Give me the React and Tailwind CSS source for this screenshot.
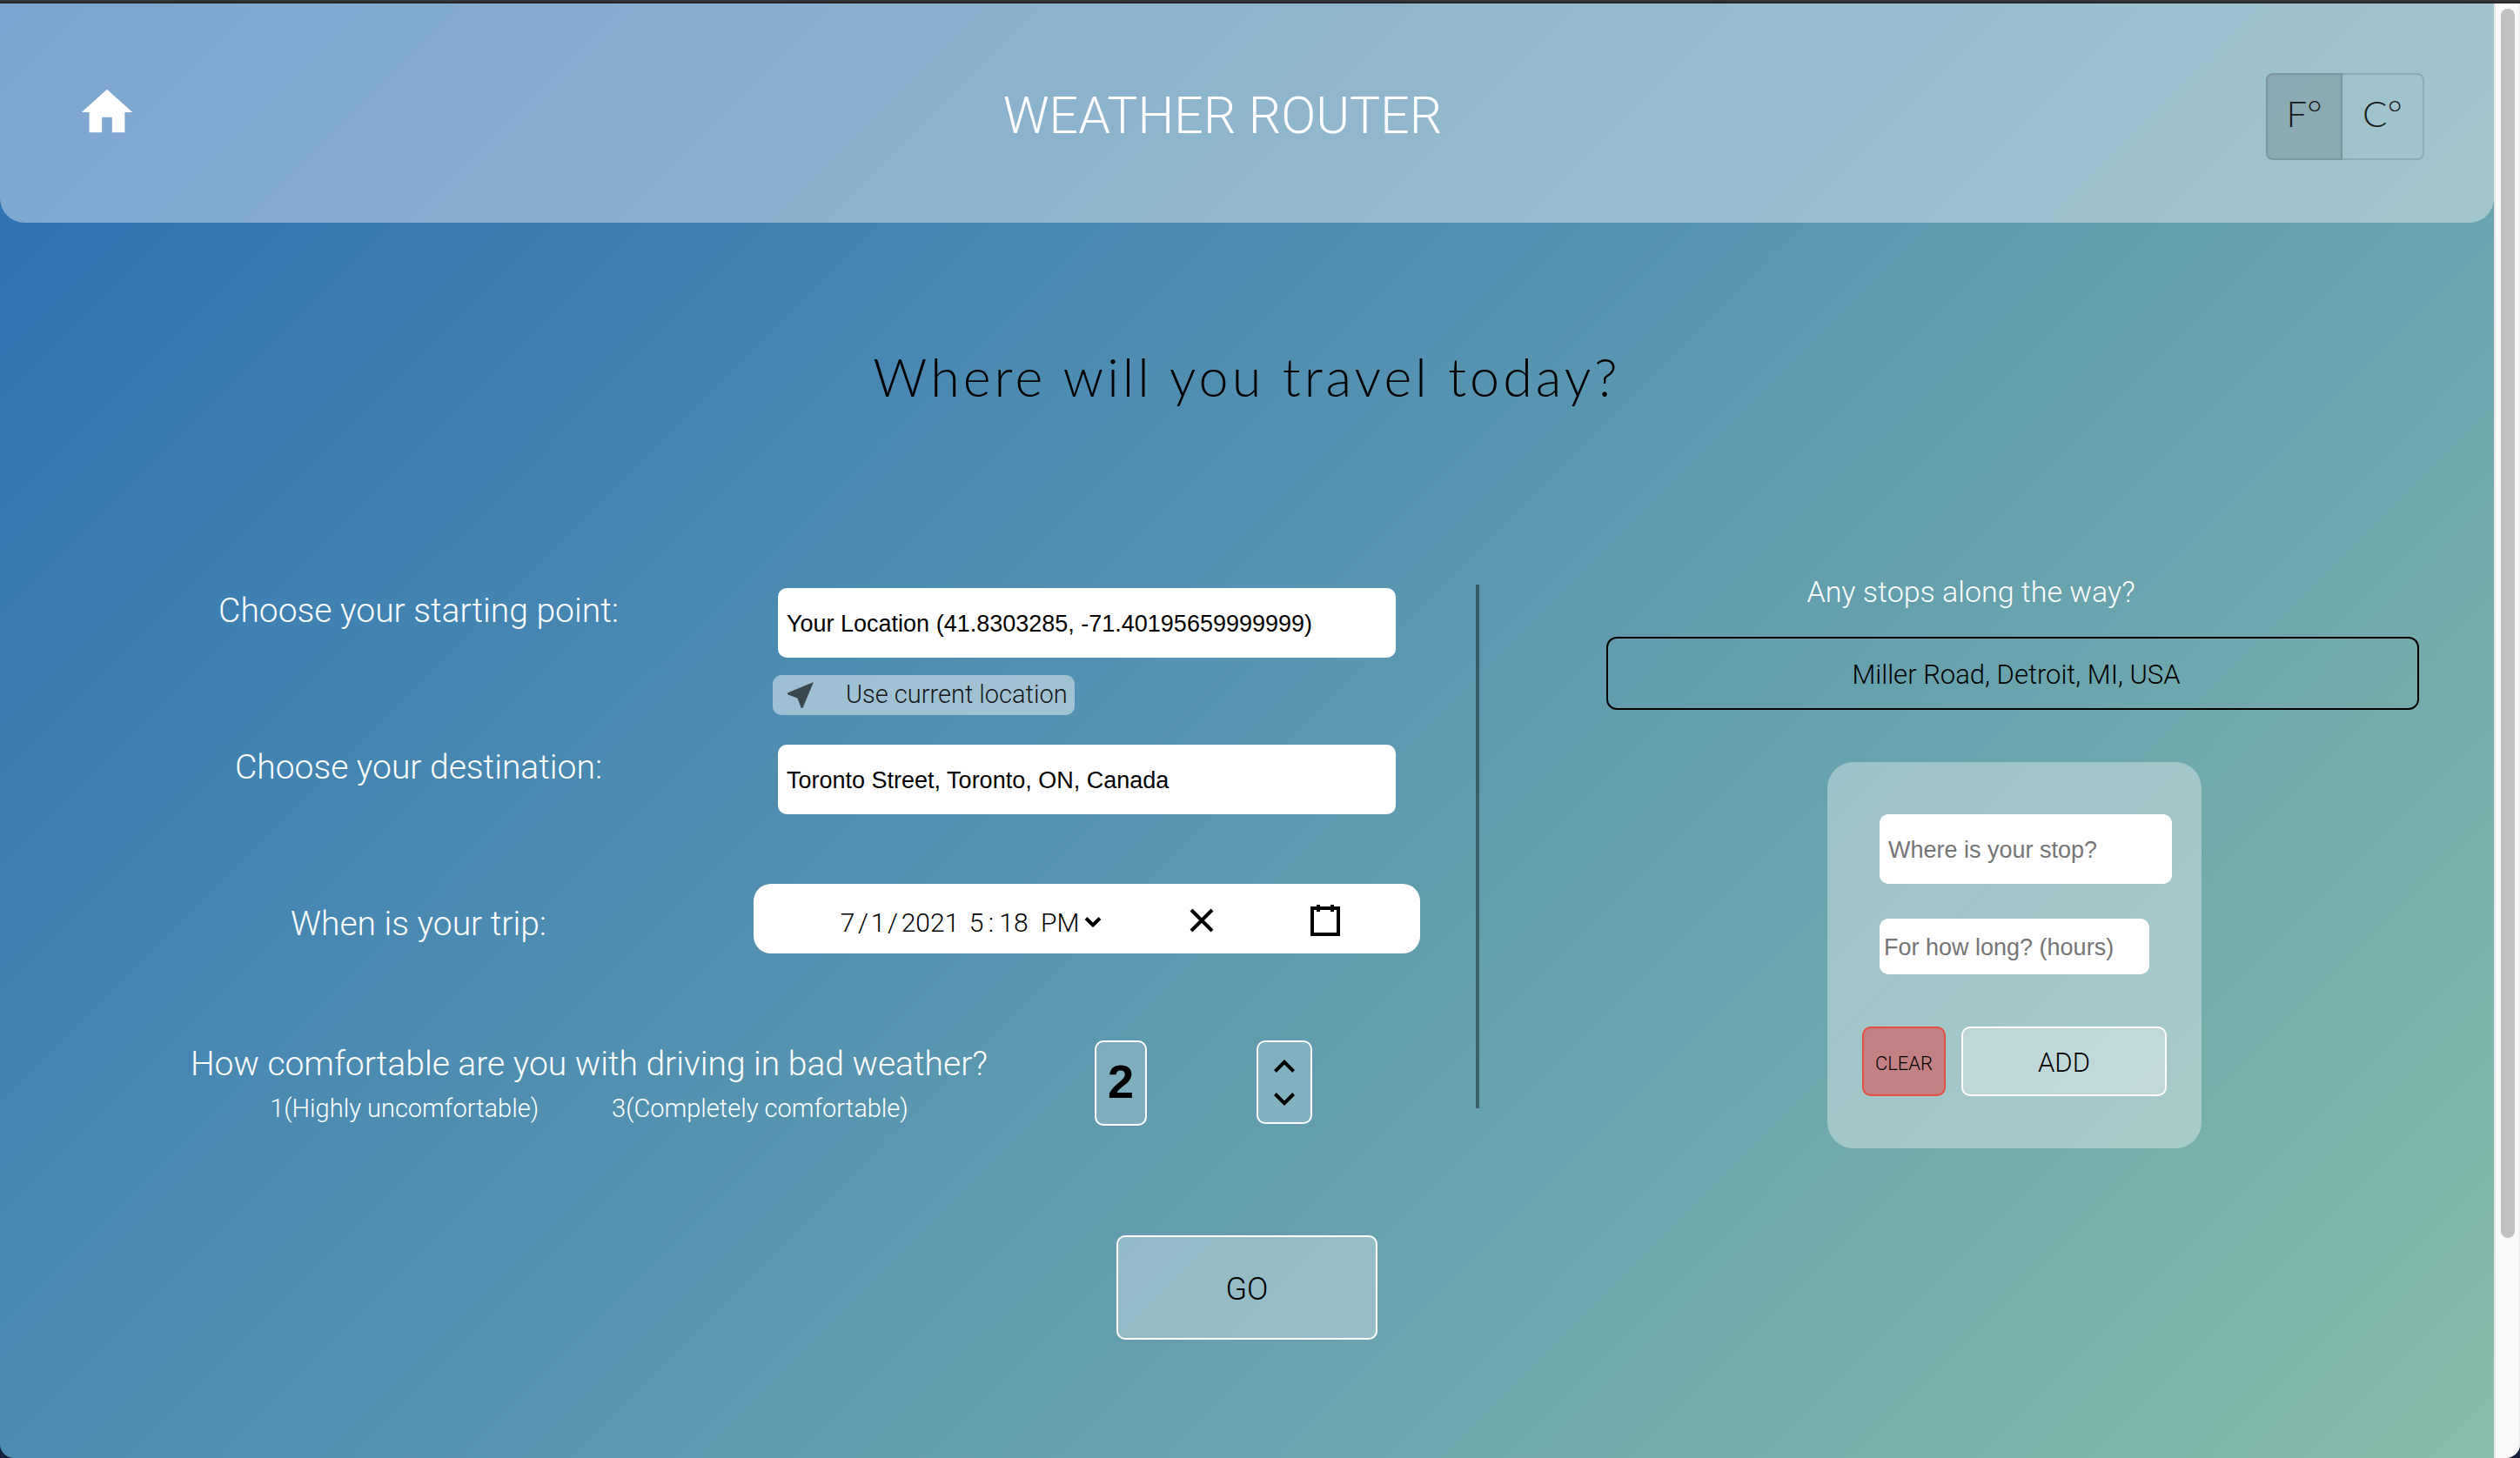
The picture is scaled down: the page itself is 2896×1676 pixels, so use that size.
import React, { useState } from "react";

function FieldLabel({ htmlFor, children }) {
  return (
    <label htmlFor={htmlFor} className="pt-[2px] text-center text-[39px] leading-12 text-white">
      {children}
    </label>
  );
}

function Header({ unit, onUnit }) {
  return (
    <header className="flex h-[252px] items-start justify-between rounded-b-[28px] bg-white/38 pr-20 pl-[88px]">
      <a href="#home" aria-label="Home" className="mt-[90px] pr-12 text-white">
        <svg viewBox="0 0 24 24" className="size-[70px]" fill="currentColor" aria-hidden="true">
          <path d="M10 20v-6h4v6h5v-8h3L12 3 2 12h3v8z" />
        </svg>
      </a>
      <h1 className="mt-[93px] text-[59px] leading-[72px] font-light text-white">WEATHER ROUTER</h1>
      <div
        role="group"
        aria-label="Temperature unit"
        className="mt-20 flex h-[100px] text-[42px] font-light text-black/87 font-['Lato',sans-serif]"
      >
        <button
          type="button"
          aria-pressed={unit === "F"}
          onClick={() => onUnit("F")}
          className="w-[88px] rounded-l-lg border-2 border-black/12 bg-black/12 pb-2"
        >
          F°
        </button>
        <button
          type="button"
          aria-pressed={unit === "C"}
          onClick={() => onUnit("C")}
          className="w-[94px] rounded-r-lg border-2 border-l-0 border-black/12 pb-2"
        >
          C°
        </button>
      </div>
    </header>
  );
}

const PART = "bg-transparent p-0 text-center outline-none";

function DateTimeField() {
  return (
    <div
      role="group"
      aria-labelledby="trip-label"
      className="flex h-20 w-full items-center rounded-[20px] bg-white pt-1 pr-[90px] pl-[98px] text-[30px] text-black"
    >
      <div className="flex items-center pt-1">
        <input id="trip-month" aria-label="Month" defaultValue="7" className={`${PART} w-[20px]`} />
        <span className="w-[16px] text-center">/</span>
        <input aria-label="Day" defaultValue="1" className={`${PART} w-[18px]`} />
        <span className="w-[16px] text-center">/</span>
        <input aria-label="Year" defaultValue="2021" className={`${PART} w-[70px]`} />
        <input aria-label="Hour" defaultValue="5" className={`${PART} ml-2 w-[20px]`} />
        <span className="w-[14px] text-center">:</span>
        <input aria-label="Minute" defaultValue="18" className={`${PART} w-[38px]`} />
        <div className="relative ml-3">
          <select
            aria-label="AM or PM"
            defaultValue="PM"
            className="w-[70px] appearance-none bg-transparent p-0 outline-none"
          >
            <option>AM</option>
            <option>PM</option>
          </select>
          <svg
            viewBox="0 0 20 14"
            className="pointer-events-none absolute top-1/2 right-0 h-[14px] w-5 -translate-y-1/2"
            fill="none"
            stroke="black"
            strokeWidth="4"
            aria-hidden="true"
          >
            <path d="M2 2.5l8 8 8-8" />
          </svg>
        </div>
      </div>
      <button type="button" aria-label="Clear date" className="ml-auto">
        <svg viewBox="0 0 38 38" className="size-[38px]" stroke="black" strokeWidth="4" aria-hidden="true">
          <path d="M7 7l24 24M31 7L7 31" />
        </svg>
      </button>
      <button type="button" aria-label="Open calendar" className="ml-[104px]">
        <svg viewBox="0 0 38 38" className="size-[38px]" fill="none" stroke="black" strokeWidth="4" aria-hidden="true">
          <path d="M4 5h30v30H4z" />
          <path d="M11 1v8M27 1v8" />
        </svg>
      </button>
    </div>
  );
}

const TEXT_INPUT =
  "rounded-[10px] bg-white text-[27px] text-black outline-none font-['Liberation_Sans',Arial,sans-serif] placeholder:text-[#757575]";

function TripForm() {
  const [comfort, setComfort] = useState(2);
  return (
    <div className="pt-1 pr-16 pl-24">
      <div className="grid grid-cols-[770fr_766fr]">
        <FieldLabel htmlFor="start">Choose your starting point:</FieldLabel>
        <div className="flex flex-col items-start pb-[34px]">
          <div className="flex w-full px-7">
            <input id="start" className={`${TEXT_INPUT} h-20 w-full px-[10px] pt-[2px]`} defaultValue="Your Location (41.8303285, -71.40195659999999)" />
          </div>
          <button
            type="button"
            className="mt-5 ml-[22px] flex h-[46px] items-center gap-8 rounded-[10px] bg-white/45 pr-2 pl-3 text-[29px] text-black/90"
          >
            <svg viewBox="0 0 24 24" className="size-10" fill="#39474f" aria-hidden="true">
              <path d="M21 3L3 10.53v.98l6.84 2.65L12.48 21h.98L21 3z" />
            </svg>
            Use current location
          </button>
        </div>

        <FieldLabel htmlFor="destination">Choose your destination:</FieldLabel>
        <div className="flex px-7 pb-20">
          <input id="destination" className={`${TEXT_INPUT} h-20 w-full px-[10px] pt-[2px]`} defaultValue="Toronto Street, Toronto, ON, Canada" />
        </div>

        <div id="trip-label" className="flex flex-col pt-5">
          <FieldLabel htmlFor="trip-month">When is your trip:</FieldLabel>
        </div>
        <DateTimeField />
      </div>

      <div className="mt-[100px] flex items-start">
        <div className="flex flex-1 flex-col items-center text-white">
          <label htmlFor="comfort" className="text-[39px] leading-[54px]">
            How comfortable are you with driving in bad weather?
          </label>
          <div className="flex gap-[84px] text-[29px] leading-12">
            <span>1(Highly uncomfortable)</span>
            <span>3(Completely comfortable)</span>
          </div>
        </div>
        <div className="flex w-[374px] items-start gap-[126px]">
          <input
            id="comfort"
            inputMode="numeric"
            readOnly
            value={comfort}
            className="h-[98px] w-[60px] rounded-[10px] border-2 border-white bg-white/20 p-0 pb-1 text-center text-[54px] font-bold text-black outline-none font-['Liberation_Sans',Arial,sans-serif]"
          />
          <div className="flex h-24 w-16 flex-col items-center justify-center rounded-[10px] border-2 border-white bg-white/20">
            <button
              type="button"
              aria-label="Increase comfort"
              onClick={() => setComfort(Math.min(3, comfort + 1))}
              className="flex h-[38px] items-center px-3"
            >
              <svg viewBox="6 8 12 7.41" className="h-[15px] w-6" aria-hidden="true">
                <path d="M7.41 15.41L12 10.83l4.59 4.58L18 14l-6-6-6 6z" />
              </svg>
            </button>
            <button
              type="button"
              aria-label="Decrease comfort"
              onClick={() => setComfort(Math.max(1, comfort - 1))}
              className="flex h-[38px] items-center px-3"
            >
              <svg viewBox="6 8.59 12 7.41" className="h-[15px] w-6" aria-hidden="true">
                <path d="M7.41 8.59L12 13.17l4.59-4.58L18 10l-6 6-6-6 1.41-1.41z" />
              </svg>
            </button>
          </div>
        </div>
      </div>
    </div>
  );
}

function StopsPanel() {
  return (
    <section className="flex flex-col items-center pr-[86px] pl-[146px]">
      <h3 className="-mt-[22px] pr-24 text-[34px] leading-[60px] text-white">Any stops along the way?</h3>
      <div className="mt-[22px] flex h-[84px] w-full items-center justify-center rounded-xl border-2 border-black pt-1 pl-2 text-[31px] text-black">
        Miller Road, Detroit, MI, USA
      </div>
      <form
        onSubmit={(e) => e.preventDefault()}
        className="mt-[60px] ml-1 flex w-[430px] flex-col rounded-[30px] bg-white/35 pt-[60px] pr-[34px] pb-[60px] pl-[60px]"
      >
        <input
          aria-label="Where is your stop?"
          placeholder="Where is your stop?"
          className={`${TEXT_INPUT} h-20 w-full px-[10px] pt-[2px]`}
        />
        <input
          aria-label="For how long? (hours)"
          placeholder="For how long? (hours)"
          className={`${TEXT_INPUT} mt-10 h-16 w-[310px] px-[5px] pt-[2px]`}
        />
        <div className="mt-[60px] -ml-5 flex gap-[18px] text-black">
          <button
            type="button"
            className="h-20 w-24 rounded-[10px] border-2 border-[#e74c3c] bg-[#e23c3c]/50 pt-1 text-[22px]"
          >
            CLEAR
          </button>
          <button type="submit" className="h-20 w-[236px] rounded-[10px] border-2 border-white bg-white/30 pt-1 text-[31px]">
            ADD
          </button>
        </div>
      </form>
    </section>
  );
}

export default function App() {
  const [unit, setUnit] = useState("F");
  return (
    <div className="flex min-h-screen flex-col bg-[#16223c] font-light font-['Roboto',sans-serif]">
      <div className="h-1 border-t-2 border-[#36373b] bg-[#252629]" />
      <div className="flex flex-1 overflow-hidden rounded-b-[16px]">
        <div className="flex-1 bg-[linear-gradient(135deg,#2b6fb3_0%,#5b97b0_52%,#88bcaa_100%)]">
          <Header unit={unit} onUnit={setUnit} />
          <main className="flex flex-col items-center pb-[136px]">
            <h2 className="pt-[141px] text-[61px] leading-[72px] tracking-[4px] text-black font-['Lato',sans-serif]">
              Where will you travel today?
            </h2>
            <div className="mt-[203px] flex w-full items-start">
              <div className="grow-[1696] basis-0">
                <TripForm />
              </div>
              <div className="mb-[46px] w-1 self-stretch bg-black/40" />
              <div className="grow-[1166] basis-0">
                <StopsPanel />
              </div>
            </div>
            <button
              type="button"
              className="mt-[100px] h-[120px] w-[300px] rounded-[10px] border-2 border-white bg-white/30 pt-1 text-[36px] text-black"
            >
              GO
            </button>
          </main>
        </div>
        <div className="flex w-[30px] flex-col border-r-2 border-l-2 border-r-[#f0f0f0] border-l-[#e6e6e6] bg-[#fafafa] pt-[6px]">
          <div className="ml-[6px] h-[84.8%] w-4 rounded-full bg-[#c1c1c1]" />
        </div>
      </div>
    </div>
  );
}
